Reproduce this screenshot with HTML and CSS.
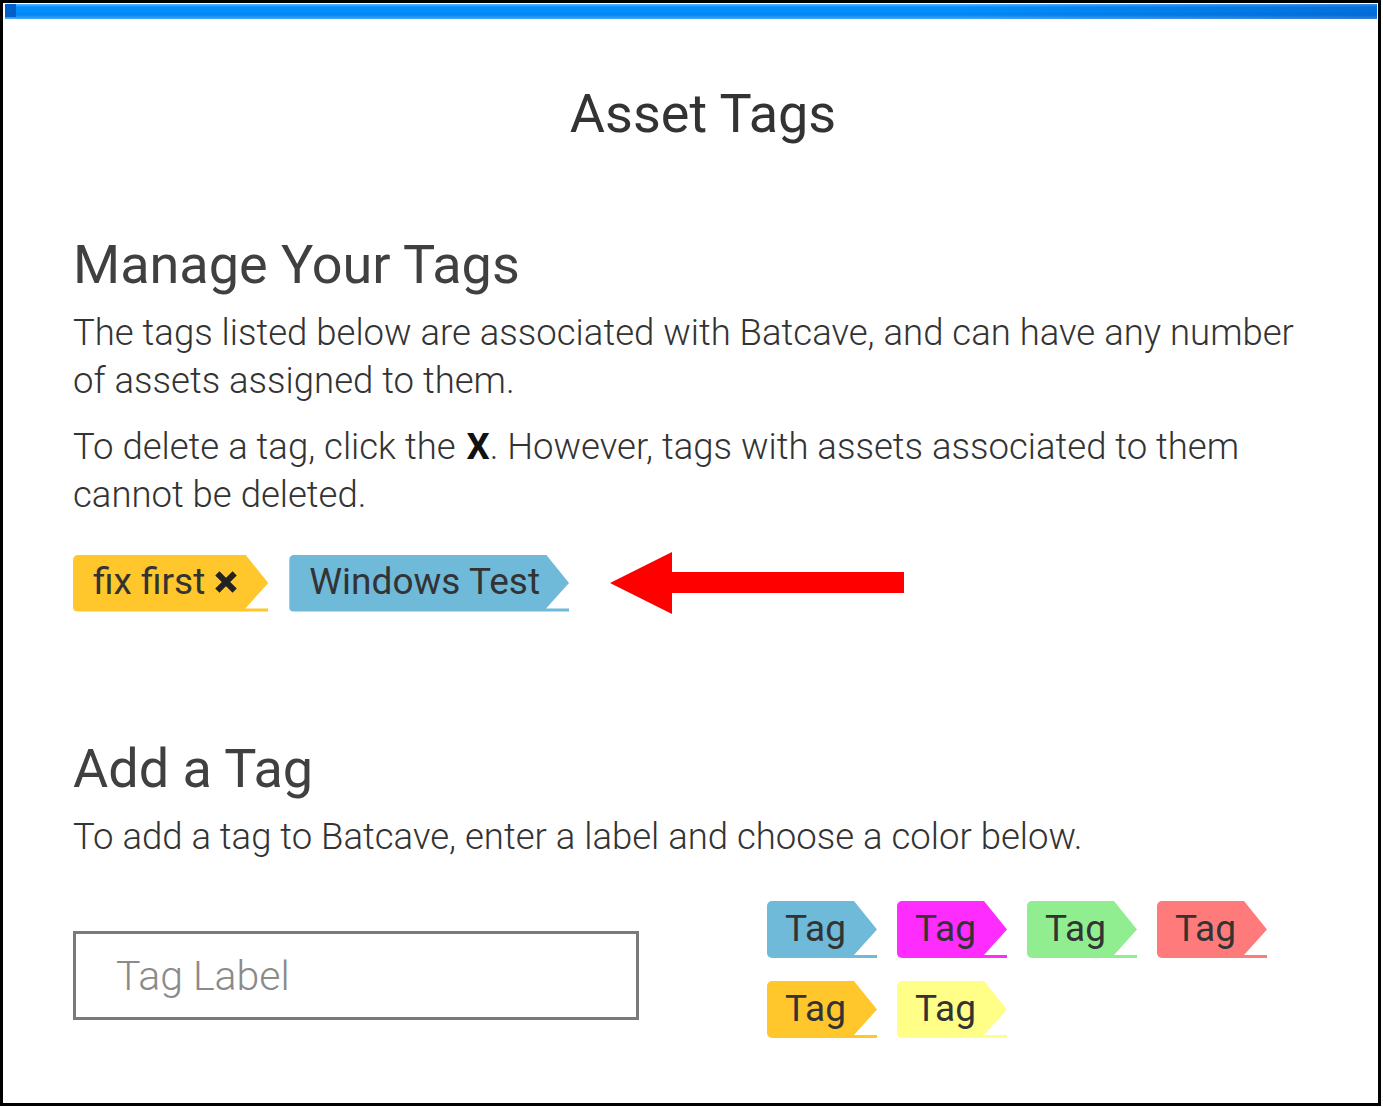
FILE: index.html
```html
<!DOCTYPE html>
<html>
<head>
<meta charset="utf-8">
<title>Asset Tags</title>
<link rel="stylesheet" href="styles.css">
</head>
<body>
<div class="frame">
  <div class="topbar"><span class="topbar-corner"></span></div>
  <div class="content">
    <h1 class="title">Asset Tags</h1>

    <h2 class="heading heading-manage">Manage Your Tags</h2>
    <p class="text">The tags listed below are associated with Batcave, and can have any number of assets assigned to them.</p>
    <p class="text">To delete a tag, click the <b class="strong-x">X</b>. However, tags with assets associated to them cannot be deleted.</p>

    <div class="tag-row">
      <span class="tag tag-yellow">fix first<svg class="tag-x" viewBox="0 0 24 24" width="26" height="26"><path d="M4 4 L20 20 M20 4 L4 20" stroke="#222" stroke-width="5.5" stroke-linecap="butt"/></svg></span>
      <span class="tag tag-blue">Windows Test</span>
      <svg class="red-arrow" viewBox="0 0 294 62" width="294" height="62"><polygon points="0,31 62,0 62,20 294,20 294,41 62,41 62,62" fill="#ff0000"/></svg>
    </div>

    <h2 class="heading heading-add">Add a Tag</h2>
    <p class="text">To add a tag to Batcave, enter a label and choose a color below.</p>

    <div class="add-row">
      <input class="tag-input" type="text" placeholder="Tag Label">
      <div class="chip-grid">
        <span class="tag chip tag-blue">Tag</span>
        <span class="tag chip tag-magenta">Tag</span>
        <span class="tag chip tag-green">Tag</span>
        <span class="tag chip tag-red">Tag</span>
        <span class="tag chip tag-yellow">Tag</span>
        <span class="tag chip tag-lightyellow">Tag</span>
      </div>
    </div>
  </div>
</div>
</body>
</html>
```

FILE: styles.css
```css
html, body {
  margin: 0;
  padding: 0;
  background: #ffffff;
}

body {
  font-family: Roboto, "Liberation Sans", sans-serif;
  color: #3a3a3a;
}

.frame {
  width: 1381px;
  height: 1106px;
  border: 3px solid #000;
  box-sizing: border-box;
  position: relative;
  overflow: hidden;
}

.topbar {
  height: 15px;
  margin: 1px 1px 0 2px;
  background: linear-gradient(to bottom, #5fb4ff 0, #0090ff 3px, #0088f6 11px, #4aa8f5 15px);
  position: relative;
}
.topbar::after {
  content: "";
  position: absolute;
  inset: 0;
  background: linear-gradient(to right, rgba(0,0,0,0) 0, rgba(0,0,0,0) 70%, rgba(0,40,140,0.3) 100%);
}
.topbar-corner {
  position: absolute;
  left: 0;
  top: 0;
  width: 11px;
  height: 13px;
  background: #0060c8;
  z-index: 1;
}

.content {
  padding: 0 0 0 70px;
}

.title {
  margin: 64px 0 0 -45px;
  text-align: center;
  font-size: 54px;
  font-weight: 400;
  line-height: 62px;
  color: #333;
}

.heading {
  font-size: 54px;
  font-weight: 400;
  line-height: 60px;
  color: #404040;
  margin: 0;
}
.heading-manage {
  margin-top: 90px;
}
.heading-add {
  margin-top: 125px;
}

.text {
  font-size: 36.5px;
  font-weight: 300;
  line-height: 48px;
  color: #333;
  margin: 14px 0 0 0;
  max-width: 1250px;
}
.text + .text {
  margin-top: 18px;
}
.text .strong-x {
  font-weight: 700;
  color: #111;
  margin-left: 2px;
}

.tag-row {
  display: flex;
  align-items: center;
  gap: 21px;
  margin-top: 33px;
}

.tag {
  display: inline-flex;
  align-items: center;
  box-sizing: border-box;
  height: 57px;
  padding: 0 29px 3px 20px;
  font-size: 37px;
  font-weight: 400;
  color: #333;
  border-radius: 5px 0 0 5px;
  white-space: nowrap;
  clip-path: polygon(0 0, calc(100% - 23px) 0, 100% 50%, calc(100% - 23px) calc(100% - 3px), 100% calc(100% - 3px), 100% 100%, 0 100%);
}

.tag-x {
  margin-left: 8px;
}

.red-arrow {
  margin-left: 20px;
  flex: none;
}

.tag-yellow { background: #ffc72c; }
.tag-blue { background: #6fb9d9; }
.tag-magenta { background: #ff2cff; }
.tag-green { background: #90ee90; }
.tag-red { background: #ff7b7b; }
.tag-lightyellow { background: #ffff88; }

.add-row {
  display: flex;
  align-items: center;
  margin-top: 40px;
}

.tag-input {
  width: 566px;
  height: 89px;
  box-sizing: border-box;
  border: 3px solid #7a7a7a;
  padding: 0 0 0 40px;
  font-family: Roboto, "Liberation Sans", sans-serif;
  font-size: 41px;
  color: #333;
  outline: none;
  margin-top: 12px;
}
.tag-input::placeholder {
  color: #8a8a8a;
  font-weight: 300;
}

.chip-grid {
  display: grid;
  grid-template-columns: repeat(4, 110px);
  column-gap: 20px;
  row-gap: 23px;
  margin-left: 128px;
}

.chip {
  width: 110px;
  padding-left: 18px;
  padding-right: 0;
}
```
